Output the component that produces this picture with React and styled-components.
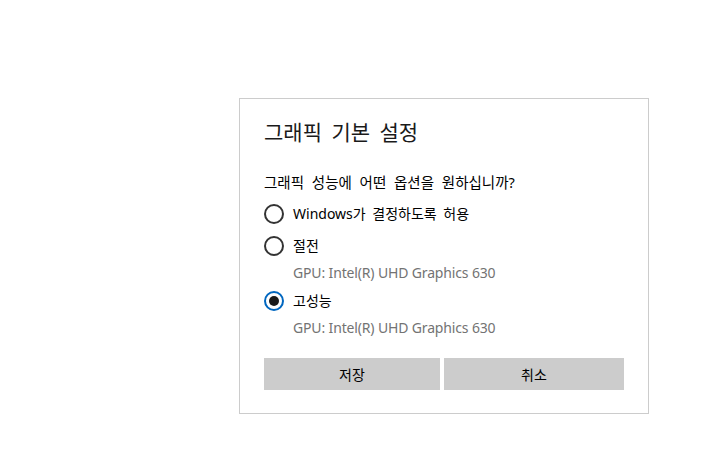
import { useState } from 'react';
import styled, { createGlobalStyle } from 'styled-components';

const GlobalStyle = createGlobalStyle`
  html, body {
    margin: 0;
    padding: 0;
    background: #ffffff;
  }
  body {
    font-family: "Noto Sans", "Noto Sans CJK KR", sans-serif;
    color: #000000;
  }
`;

const options = [
  { id: 'auto', label: 'Windows가 결정하도록 허용' },
  { id: 'save', label: '절전', gpu: 'GPU: Intel(R) UHD Graphics 630' },
  { id: 'high', label: '고성능', gpu: 'GPU: Intel(R) UHD Graphics 630' },
];

function App() {
  const [selected, setSelected] = useState('high');

  return (
    <>
      <GlobalStyle />
      <Page>
        <Dialog>
          <Title>그래픽 기본 설정</Title>
          <Question>그래픽 성능에 어떤 옵션을 원하십니까?</Question>
          <Options>
            {options.map((opt) => (
              <Option key={opt.id}>
                <Row onClick={() => setSelected(opt.id)}>
                  <Radio checked={selected === opt.id} />
                  <Label>{opt.label}</Label>
                </Row>
                {opt.gpu && <Sub>{opt.gpu}</Sub>}
              </Option>
            ))}
          </Options>
          <Buttons>
            <Button type="button">저장</Button>
            <Button type="button">취소</Button>
          </Buttons>
        </Dialog>
      </Page>
    </>
  );
}

const Page = styled.div`
  padding: 98px 0 0 239px;
`;

const Dialog = styled.div`
  width: 360px;
  padding: 19px 24px 23px 24px;
  border: 1px solid #cccccc;
  background: #ffffff;
`;

const Title = styled.h1`
  margin: 0 0 26px 0;
  font-size: 21px;
  line-height: 28px;
  font-weight: 400;
  word-spacing: 4px;
  color: #1a1a1a;
`;

const Question = styled.div`
  font-size: 14.5px;
  line-height: 20px;
  word-spacing: 4px;
  margin-bottom: 6px;
`;

const Options = styled.div`
  display: flex;
  flex-direction: column;
`;

const Option = styled.div`
  display: flex;
  flex-direction: column;
`;

const Row = styled.div`
  display: flex;
  align-items: center;
  height: 32px;
  gap: 9px;
  cursor: pointer;
`;

const Radio = styled.span`
  box-sizing: border-box;
  width: 20px;
  height: 20px;
  border-radius: 50%;
  border: 2px solid ${(p) => (p.checked ? '#0067c0' : '#333333')};
  display: flex;
  align-items: center;
  justify-content: center;
  flex-shrink: 0;

  &::after {
    content: '';
    display: ${(p) => (p.checked ? 'block' : 'none')};
    width: 10px;
    height: 10px;
    border-radius: 50%;
    background: #1a1a1a;
  }
`;

const Label = styled.span`
  font-size: 14px;
  line-height: 20px;
  word-spacing: 3px;
`;

const Sub = styled.div`
  padding-left: 29px;
  font-size: 14px;
  line-height: 22px;
  letter-spacing: -0.15px;
  color: #737373;
  margin-bottom: 1px;
`;

const Buttons = styled.div`
  display: grid;
  grid-template-columns: 176px 1fr;
  gap: 4px;
  margin-top: 18px;
`;

const Button = styled.button`
  height: 32px;
  border: none;
  background: #cccccc;
  font-family: "Noto Sans", "Noto Sans CJK KR", sans-serif;
  font-size: 14px;
  color: #000000;
  padding: 0;
`;

export default App;
